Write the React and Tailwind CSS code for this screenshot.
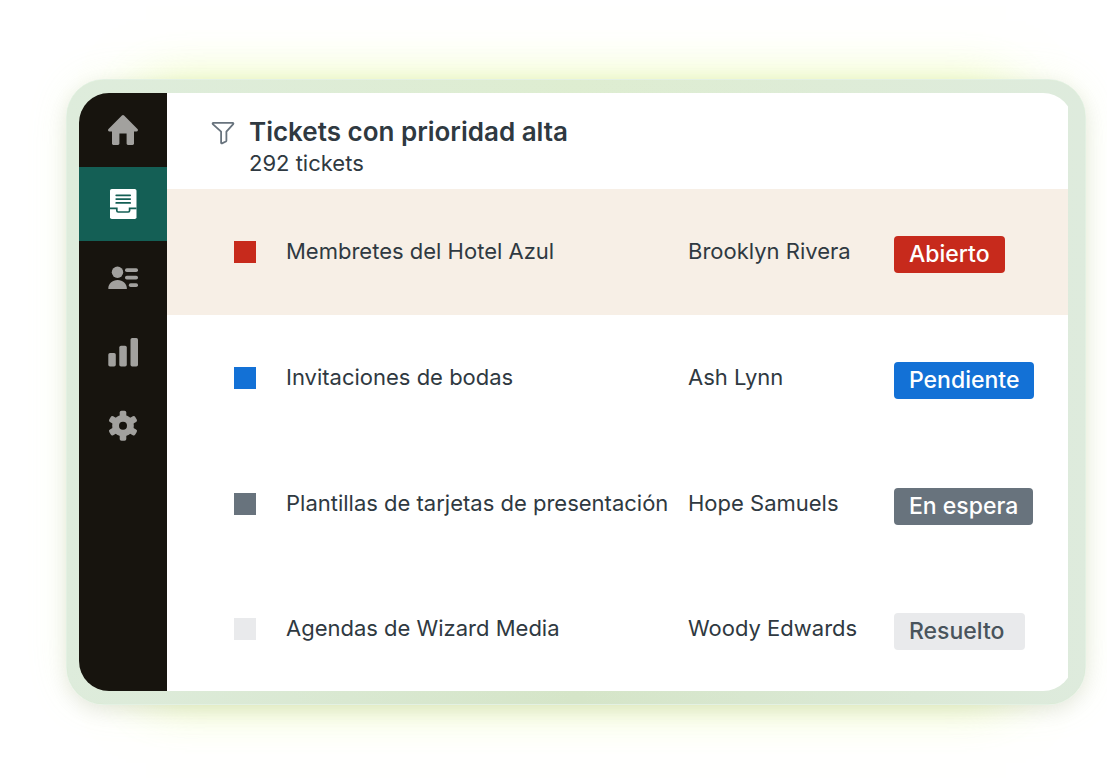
const NAV = [
  { label: 'Inicio', Icon: HomeIcon },
  { label: 'Vistas', Icon: InboxIcon, active: true },
  { label: 'Clientes', Icon: CustomersIcon },
  { label: 'Informes', Icon: ReportsIcon },
  { label: 'Configuración', Icon: GearIcon },
]

const TICKETS = [
  { subject: 'Membretes del Hotel Azul', requester: 'Brooklyn Rivera', status: 'Abierto', swatch: 'bg-[#c72a1c]', badge: 'bg-[#c72a1c] text-white', selected: true },
  { subject: 'Invitaciones de bodas', requester: 'Ash Lynn', status: 'Pendiente', swatch: 'bg-[#1371d6]', badge: 'bg-[#1371d6] text-white' },
  { subject: 'Plantillas de tarjetas de presentación', requester: 'Hope Samuels', status: 'En espera', swatch: 'bg-[#68737d]', badge: 'bg-[#68737d] text-white' },
  { subject: 'Agendas de Wizard Media', requester: 'Woody Edwards', status: 'Resuelto', swatch: 'bg-[#e9eaec]', badge: 'bg-[#e9eaec] pr-[21px] text-[#49545c]' },
]

const GEAR_TEETH = [0, 60, 120, 180, 240, 300]

function HomeIcon() {
  return (
    <svg width="32" height="32" viewBox="0 0 32 32" fill="currentColor" aria-hidden="true">
      <path d="M14.9 1.5a1.6 1.6 0 0 1 2.2 0L30.5 15c1 1 .4 2.400-1 2.400H27v12.200c0 .8-.6 1.400-1.400 1.400H21c-.8 0-1.400-.6-1.400-1.400V19.400h-7.200v10.200c0 .8-.6 1.400-1.400 1.400H6.400c-.8 0-1.400-.6-1.400-1.400V17.400H2.500c-1.400 0-2-1.400-1-2.400z" />
    </svg>
  )
}

function InboxIcon() {
  return (
    <svg width="32" height="32" viewBox="0 0 32 32" fill="none" aria-hidden="true">
      <rect x="3" y="1" width="26.500" height="30" rx="1.800" fill="#fff" />
      <g stroke="#145f55" strokeWidth="1.700">
        <path d="M9.200 7.300h14M9.200 11.100h14M9.200 14.900h14" strokeLinecap="round" />
        <path d="M3 20.400h6.800v2.200c0 .9.500 1.400 1.400 1.400h10c.9 0 1.400-.5 1.400-1.400v-2.200h6.900" />
      </g>
    </svg>
  )
}

function CustomersIcon() {
  return (
    <svg width="32" height="32" viewBox="0 0 32 32" fill="currentColor" aria-hidden="true">
      <circle cx="10.500" cy="10.200" r="5.700" />
      <path d="M1.300 26.500c0-5 4-8.600 9.300-8.600s9.300 3.600 9.300 8.600c0 .4-.2.600-.6.600H1.900c-.4 0-.6-.2-.6-.6z" />
      <rect x="18" y="6.300" width="13" height="3.800" rx="1.800" />
      <rect x="18" y="13.800" width="13" height="3.800" rx="1.800" />
      <rect x="21.800" y="21.300" width="9.200" height="3.800" rx="1.800" />
    </svg>
  )
}

function ReportsIcon() {
  return (
    <svg width="32" height="32" viewBox="0 0 32 32" fill="currentColor" aria-hidden="true">
      <rect x="1.300" y="17" width="7.500" height="13.500" rx="1.700" />
      <rect x="12.300" y="9.700" width="7.500" height="20.800" rx="1.700" />
      <rect x="23.500" y="2" width="7.500" height="28.500" rx="1.700" />
    </svg>
  )
}

function GearIcon() {
  return (
    <svg width="32" height="32" viewBox="0 0 32 32" fill="currentColor" aria-hidden="true">
      <circle cx="16" cy="15.700" r="10.800" />
      {GEAR_TEETH.map(angle => (
        <rect key={angle} x="12.700" y=".7" width="6.600" height="9" rx="1.800" transform={`rotate(${angle} 16 15.7)`} />
      ))}
      <circle cx="16" cy="15.700" r="4" fill="#17140e" />
    </svg>
  )
}

function FilterIcon() {
  return (
    <svg width="24" height="24" viewBox="0 0 24 24" fill="none" stroke="#68737d" strokeWidth="1.800" strokeLinejoin="round" aria-hidden="true">
      <path d="M2.300 1.900h19.400c.7 0 .9.700.5 1.200l-6.800 7.600v8.900c0 .4-.2.700-.5.900l-3.900 1.900c-.5.200-.9-.1-.9-.6V10.700L1.800 3.100c-.4-.5-.2-1.200.5-1.200z" />
    </svg>
  )
}

function Sidebar() {
  return (
    <nav className="w-[88px] shrink-0 bg-[#17140e]">
      {NAV.map(({ label, Icon, active }) => (
        <button
          key={label}
          type="button"
          aria-label={label}
          aria-current={active ? 'page' : undefined}
          className={`flex h-[74px] w-full items-center justify-center ${active ? 'bg-[#145f55] text-white' : 'text-[#a2a19e]'}`}
        >
          <Icon />
        </button>
      ))}
    </nav>
  )
}

function TicketRow({ subject, requester, status, swatch, badge, selected }) {
  return (
    <tr className={`h-[126px] last:h-[124px] ${selected ? 'bg-[#f7efe6]' : ''}`}>
      <td>
        <span className={`ml-[67px] block size-[22px] ${swatch}`} />
      </td>
      <td className="pb-0.5 whitespace-nowrap">{subject}</td>
      <td className="pb-0.5 whitespace-nowrap">{requester}</td>
      <td className="pt-1">
        <span className={`inline-block rounded-[4px] px-[15px] py-1 text-[23px] leading-[29px] font-medium whitespace-nowrap ${badge}`}>
          {status}
        </span>
      </td>
    </tr>
  )
}

export default function App() {
  return (
    <div className="flex min-h-screen overflow-hidden bg-white pt-[79px] pr-[21px] pb-[77px] pl-[66px] font-['Inter',sans-serif] text-[#2f3941]">
      {/* Tinted frame with a soft lime glow above and below */}
      <div className="flex flex-1 rounded-[38px] border border-[#e3f1e3] bg-linear-to-b from-[#deedd1] to-[#d5e5c8] shadow-[0_6px_20px_rgba(0,0,0,0.09),0_-70px_56px_-80px_rgba(220,250,110,0.6),0_70px_56px_-80px_rgba(220,250,110,0.6),0_0_44px_-8px_rgba(220,245,150,0.3)]">
        <div className="flex flex-1 rounded-[37px] bg-linear-to-r from-[#deecdc] via-transparent to-[#deebdd] pt-[13px] pr-[12px] pb-[13px] pl-[12px]">
          <div className="flex flex-1 overflow-hidden rounded-[30px] pr-[5px]">
            <Sidebar />
            <main className="min-w-0 flex-1 bg-white">
              <header className="flex h-24 gap-[14px] pt-6 pl-[44px]">
                <span className="mt-1">
                  <FilterIcon />
                </span>
                <div>
                  <h1 className="text-[26px] leading-[30px] font-semibold">Tickets con prioridad alta</h1>
                  <p className="text-[22px] leading-8">292 tickets</p>
                </div>
              </header>
              <table className="w-full table-fixed border-collapse text-[22px] leading-[30px]">
                <colgroup>
                  <col className="w-[119px]" />
                  <col />
                  <col className="w-[206px]" />
                  <col className="w-[174px]" />
                </colgroup>
                <tbody>
                  {TICKETS.map(ticket => (
                    <TicketRow key={ticket.subject} {...ticket} />
                  ))}
                </tbody>
              </table>
            </main>
          </div>
        </div>
      </div>
    </div>
  )
}
